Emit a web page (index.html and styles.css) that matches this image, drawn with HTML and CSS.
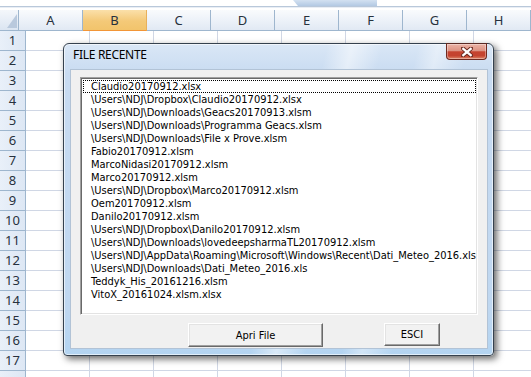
FILE: index.html
```html
<!DOCTYPE html>
<html lang="it">
<head>
<meta charset="utf-8">
<title>File recente</title>
<link rel="stylesheet" href="styles.css">
</head>
<body>
<div class="app">
  <div class="topbar"><div class="tab"></div></div>
  <div class="sheet">
    <div class="colhdr">
      <div class="corner"><svg width="10" height="14" viewBox="0 0 10 14"><path d="M10 0 L10 14 L0 14 Z" fill="#b9c9dd"/></svg></div>
      <div class="ch">A</div>
      <div class="ch sel">B</div>
      <div class="ch">C</div>
      <div class="ch">D</div>
      <div class="ch">E</div>
      <div class="ch">F</div>
      <div class="ch">G</div>
      <div class="ch">H</div>
    </div>
    <div class="row"><div class="rh">1</div><div class="cells"></div></div>
    <div class="row"><div class="rh">2</div><div class="cells"></div></div>
    <div class="row"><div class="rh">3</div><div class="cells"></div></div>
    <div class="row"><div class="rh">4</div><div class="cells"></div></div>
    <div class="row"><div class="rh">5</div><div class="cells"></div></div>
    <div class="row"><div class="rh">6</div><div class="cells"></div></div>
    <div class="row"><div class="rh">7</div><div class="cells"></div></div>
    <div class="row"><div class="rh">8</div><div class="cells"></div></div>
    <div class="row"><div class="rh">9</div><div class="cells"></div></div>
    <div class="row"><div class="rh">10</div><div class="cells"></div></div>
    <div class="row"><div class="rh">11</div><div class="cells"></div></div>
    <div class="row"><div class="rh">12</div><div class="cells"></div></div>
    <div class="row"><div class="rh">13</div><div class="cells"></div></div>
    <div class="row"><div class="rh">14</div><div class="cells"></div></div>
    <div class="row"><div class="rh">15</div><div class="cells"></div></div>
    <div class="row"><div class="rh">16</div><div class="cells"></div></div>
    <div class="row"><div class="rh">17</div><div class="cells"></div></div>
    <div class="row"><div class="rh"></div><div class="cells"></div></div>
  </div>

  <div class="dialog">
    <div class="titlebar">
      <div class="title">FILE RECENTE</div>
      <div class="close">
        <svg width="12" height="10" viewBox="0 0 12 10">
          <path d="M2 1.5 L10 8.5 M10 1.5 L2 8.5" stroke="#6b2a20" stroke-width="4.2" stroke-linecap="round" fill="none"/>
          <path d="M2.3 1.8 L9.7 8.2 M9.7 1.8 L2.3 8.2" stroke="#ffffff" stroke-width="2.3" stroke-linecap="square" fill="none"/>
        </svg>
      </div>
    </div>
    <div class="client">
      <div class="listbox">
        <div class="item focus">Claudio20170912.xlsx</div>
        <div class="item">\Users\NDJ\Dropbox\Claudio20170912.xlsx</div>
        <div class="item">\Users\NDJ\Downloads\Geacs20170913.xlsm</div>
        <div class="item">\Users\NDJ\Downloads\Programma Geacs.xlsm</div>
        <div class="item">\Users\NDJ\Downloads\File x Prove.xlsm</div>
        <div class="item">Fabio20170912.xlsm</div>
        <div class="item">MarcoNidasi20170912.xlsm</div>
        <div class="item">Marco20170912.xlsm</div>
        <div class="item">\Users\NDJ\Dropbox\Marco20170912.xlsm</div>
        <div class="item">Oem20170912.xlsm</div>
        <div class="item">Danilo20170912.xlsm</div>
        <div class="item">\Users\NDJ\Dropbox\Danilo20170912.xlsm</div>
        <div class="item">\Users\NDJ\Downloads\lovedeepsharmaTL20170912.xlsm</div>
        <div class="item">\Users\NDJ\AppData\Roaming\Microsoft\Windows\Recent\Dati_Meteo_2016.xls</div>
        <div class="item">\Users\NDJ\Downloads\Dati_Meteo_2016.xls</div>
        <div class="item">Teddyk_His_20161216.xlsm</div>
        <div class="item">VitoX_20161024.xlsm.xlsx</div>
      </div>
      <div class="buttons">
        <div class="btn btn-open">Apri File</div>
        <div class="btn btn-exit">ESCI</div>
      </div>
    </div>
  </div>
</div>
</body>
</html>
```

FILE: styles.css
```css
* { box-sizing: border-box; }
html, body { margin: 0; padding: 0; }
body {
  width: 531px;
  height: 377px;
  overflow: hidden;
  background: #ffffff;
  font-family: "Noto Sans", sans-serif;
}
.app {
  position: relative;
  width: 531px;
  height: 377px;
  overflow: hidden;
}

/* top ribbon remnant */
.topbar {
  height: 10px;
  padding-left: 293px;
  background: linear-gradient(to bottom, #ffffff 0 6px, #b9c8da 6px 7px, #e9eef5 7px 8px, #ffffff 8px);
}
.tab {
  width: 84px;
  height: 6px;
  background: linear-gradient(#d3e1f1, #b3c9e3);
  clip-path: polygon(0 0, 100% 0, 100% 100%, 5px 100%);
}

/* sheet */
.colhdr { display: flex; height: 21px; }
.corner {
  width: 26px;
  border-right: 1px solid #9eb6ce;
  border-bottom: 1px solid #9eb6ce;
  background: linear-gradient(#f4f7fb, #dbe5f2);
  display: flex;
  align-items: flex-end;
  justify-content: flex-end;
  padding: 0 1px 2px 0;
}
.corner svg { display: block; }
.ch {
  width: 64px;
  flex: none;
  border-right: 1px solid #9eb6ce;
  border-bottom: 1px solid #9eb6ce;
  background: linear-gradient(#f9fbfd, #e1e9f4);
  text-align: center;
  font-size: 13px;
  line-height: 20px;
  color: #27313d;
}
.ch.sel {
  background: linear-gradient(#fbe0aa, #f4c978 55%, #f2c46c);
  border-right-color: #e8b05a;
  border-bottom-color: #f29536;
}
.row { display: flex; height: 20px; }
.rh {
  width: 26px;
  flex: none;
  border-right: 1px solid #9eb6ce;
  border-bottom: 1px solid #9eb6ce;
  background: linear-gradient(to right, #e9f0f9, #dde7f4);
  text-align: center;
  font-size: 13px;
  line-height: 19px;
  color: #27313d;
}
.cells {
  flex: 1;
  border-bottom: 1px solid #d0d7e5;
  background: repeating-linear-gradient(to right, #ffffff 0 63px, #d0d7e5 63px 64px);
}

/* dialog window */
.dialog {
  position: absolute;
  left: 63px;
  top: 43px;
  width: 431px;
  height: 313px;
  border: 1px solid #35414e;
  border-radius: 6px 6px 4px 4px;
  padding: 0 5px 6px 6px;
  display: flex;
  flex-direction: column;
  background:
    linear-gradient(104deg, transparent 0 52%, rgba(255,255,255,0.5) 57%, transparent 63%, transparent 70%, rgba(255,255,255,0.4) 74%, transparent 80%),
    linear-gradient(#dae7f6, #c8dbf1 30px, #bfd7f0 85%, #b3d4f1);
  box-shadow: 3px 3px 7px rgba(0,0,0,0.6), inset 0 0 0 1px rgba(255,255,255,0.6);
}
.titlebar {
  height: 25px;
  flex: none;
  display: flex;
  justify-content: space-between;
  align-items: flex-start;
  padding-left: 3px;
}
.title {
  font-family: "Noto Sans", sans-serif;
  font-size: 12px;
  line-height: 16px;
  margin-top: 3px;
  color: #000;
  letter-spacing: -0.3px;
}
.close {
  width: 41px;
  height: 17px;
  margin-top: -1px;
  margin-right: 1px;
  border: 1px solid #6e2a20;
  border-top-color: #5a2a24;
  border-radius: 0 0 4px 4px;
  background: linear-gradient(#ecb3a6 0%, #dc9282 45%, #c5432f 52%, #c4432f 78%, #de8668 100%);
  box-shadow: inset 0 0 0 1px rgba(255,255,255,0.35);
  display: flex;
  align-items: center;
  justify-content: center;
}
.close svg { display: block; }

.client {
  flex: 1;
  background: #f0f0f0;
  border: 1px solid #b2c3d6;
  padding: 7px 0 0 9px;
  display: flex;
  flex-direction: column;
}
.listbox {
  width: 398px;
  height: 238px;
  flex: none;
  background: #ffffff;
  border: 1px solid;
  border-color: #a0a0a0 #ffffff #ffffff #a0a0a0;
  box-shadow: inset 1px 1px #696969, inset -1px -1px #e3e3e3;
  padding: 2px 1px 1px 2px;
  overflow: hidden;
}
.item {
  height: 13px;
  line-height: 13px;
  padding-left: 8px;
  font-family: "DejaVu Sans Condensed", "DejaVu Sans", sans-serif;
  font-size: 11px;
  white-space: nowrap;
  color: #000;
}
.item.focus {
  outline: 1px dotted #000;
  outline-offset: -1px;
}
.buttons {
  display: flex;
  align-items: flex-start;
  margin-top: 8px;
  padding-left: 108px;
}
.btn {
  height: 24px;
  background: #f2f2f2;
  border: 1px solid;
  border-color: #ffffff #696969 #696969 #ffffff;
  box-shadow: inset -1px -1px #a0a0a0, inset 1px 1px #e3e3e3;
  display: flex;
  align-items: center;
  justify-content: center;
  font-family: "DejaVu Sans Condensed", "DejaVu Sans", sans-serif;
  font-size: 11px;
  color: #000;
}
.btn-open { width: 135px; }
.btn-exit { width: 56px; height: 23px; margin-left: 61px; }
```
